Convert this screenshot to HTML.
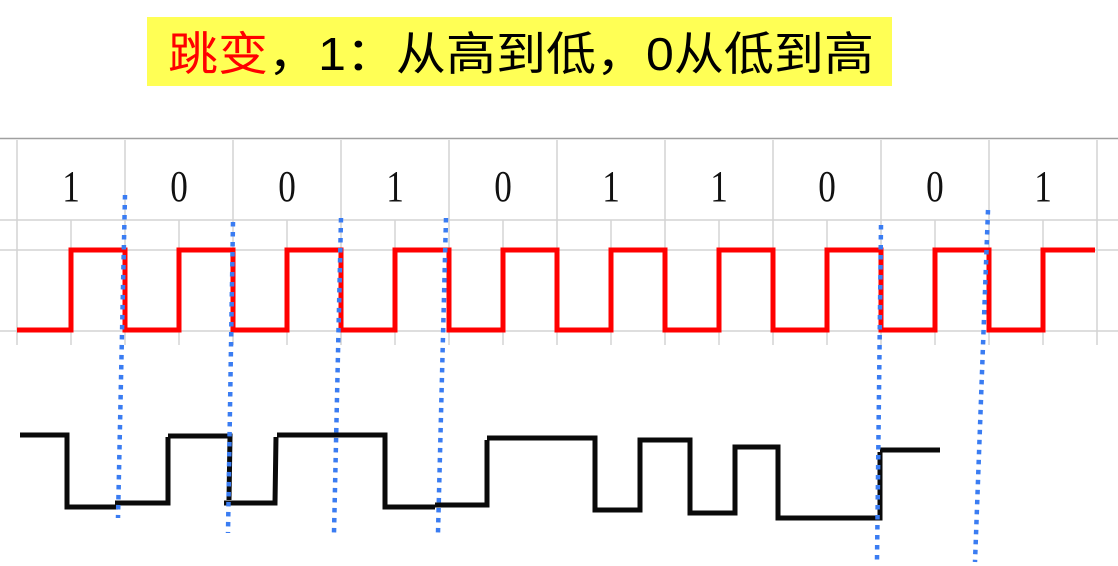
<!DOCTYPE html>
<html><head><meta charset="utf-8"><style>
html,body{margin:0;padding:0;background:#fff;width:1118px;height:566px;overflow:hidden}
</style></head><body>
<svg width="1118" height="566" viewBox="0 0 1118 566" xmlns="http://www.w3.org/2000/svg">
<rect x="147" y="17" width="745" height="69" fill="#ffff55"/>
<text x="168" y="70" font-size="46" font-family="'Liberation Sans','Noto Sans CJK SC',sans-serif" textLength="706" lengthAdjust="spacingAndGlyphs"><tspan fill="#ff0000">跳变</tspan><tspan fill="#000">，1：从高到低，0从低到高</tspan></text>
<g stroke="#d4d4d4" stroke-width="1.5">
<line x1="0" y1="220" x2="1118" y2="220"/>
<line x1="0" y1="250" x2="1118" y2="250"/>
<line x1="0" y1="331" x2="1118" y2="331"/>
<line x1="17" y1="140" x2="17" y2="345"/><line x1="125" y1="140" x2="125" y2="345"/><line x1="233" y1="140" x2="233" y2="345"/><line x1="341" y1="140" x2="341" y2="345"/><line x1="449" y1="140" x2="449" y2="345"/><line x1="557" y1="140" x2="557" y2="345"/><line x1="665" y1="140" x2="665" y2="345"/><line x1="773" y1="140" x2="773" y2="345"/><line x1="881" y1="140" x2="881" y2="345"/><line x1="989" y1="140" x2="989" y2="345"/><line x1="1097" y1="140" x2="1097" y2="345"/>
<line x1="71" y1="220" x2="71" y2="345"/><line x1="179" y1="220" x2="179" y2="345"/><line x1="287" y1="220" x2="287" y2="345"/><line x1="395" y1="220" x2="395" y2="345"/><line x1="503" y1="220" x2="503" y2="345"/><line x1="611" y1="220" x2="611" y2="345"/><line x1="719" y1="220" x2="719" y2="345"/><line x1="827" y1="220" x2="827" y2="345"/><line x1="935" y1="220" x2="935" y2="345"/><line x1="1043" y1="220" x2="1043" y2="345"/>
</g>
<line x1="0" y1="138.5" x2="1118" y2="138.5" stroke="#a0a0a0" stroke-width="1.5"/>
<g font-family="'Liberation Serif',serif" font-size="44" text-anchor="middle" fill="#111">
<text x="71" y="201" transform="translate(71 0) scale(0.8 1) translate(-71 0)">1</text>
<text x="179" y="201" transform="translate(179 0) scale(0.8 1) translate(-179 0)">0</text>
<text x="287" y="201" transform="translate(287 0) scale(0.8 1) translate(-287 0)">0</text>
<text x="395" y="201" transform="translate(395 0) scale(0.8 1) translate(-395 0)">1</text>
<text x="503" y="201" transform="translate(503 0) scale(0.8 1) translate(-503 0)">0</text>
<text x="611" y="201" transform="translate(611 0) scale(0.8 1) translate(-611 0)">1</text>
<text x="719" y="201" transform="translate(719 0) scale(0.8 1) translate(-719 0)">1</text>
<text x="827" y="201" transform="translate(827 0) scale(0.8 1) translate(-827 0)">0</text>
<text x="935" y="201" transform="translate(935 0) scale(0.8 1) translate(-935 0)">0</text>
<text x="1043" y="201" transform="translate(1043 0) scale(0.8 1) translate(-1043 0)">1</text>
</g>
<path d="M17 330 H71 V250 H125 V330 H179 V250 H233 V330 H287 V250 H341 V330 H395 V250 H449 V330 H503 V250 H557 V330 H611 V250 H665 V330 H719 V250 H773 V330 H827 V250 H881 V330 H935 V250 H989 V330 H1043 V250 H1095" fill="none" stroke="#ff0000" stroke-width="5"/>
<g fill="none" stroke="#0a0a0a" stroke-width="5">
<path d="M20 435 H67 V507 H118"/>
<path d="M115 503 H168 V437"/>
<path d="M168 436 H230 L229 500"/>
<path d="M224 503 H275 L276 437"/>
<path d="M277 435 H385 V507 H435"/>
<path d="M435 505 H487 V440"/>
<path d="M487 438 H595 V510 H640 V440 H690 V513 H735 V447 H778 V518 H880 V452"/>
<path d="M880 450 H940"/>
</g>
<g stroke="#3a7cf2" stroke-width="4.5" stroke-dasharray="4.5 5.5" fill="none">
<line x1="125" y1="195" x2="118" y2="518"/>
<line x1="233" y1="222" x2="228" y2="533"/>
<line x1="341" y1="218" x2="334" y2="533"/>
<line x1="446" y1="218" x2="438" y2="533"/>
<line x1="881" y1="225" x2="877" y2="560"/>
<line x1="988" y1="210" x2="975" y2="562"/>
</g>
</svg>
</body></html>
